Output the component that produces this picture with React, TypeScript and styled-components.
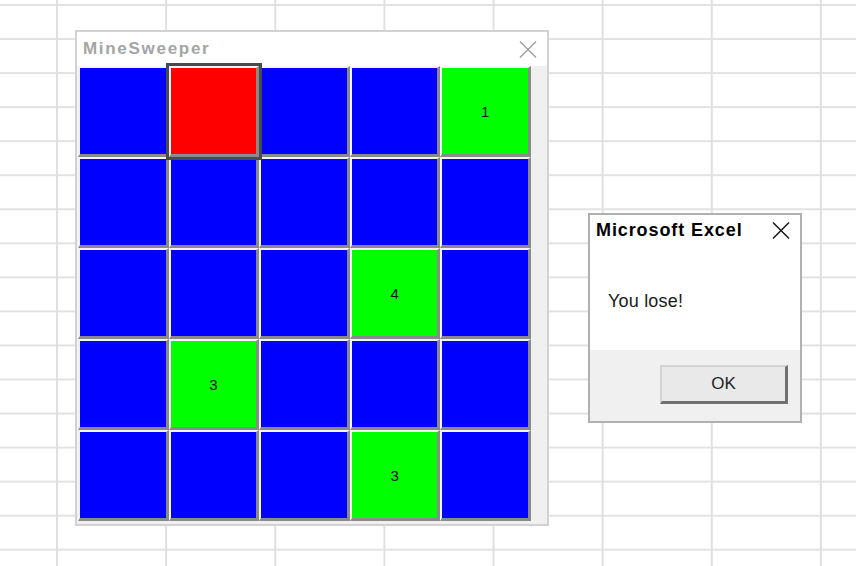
import React from "react";
import styled, { createGlobalStyle } from "styled-components";

const GlobalStyle = createGlobalStyle`
  html, body {
    margin: 0;
    padding: 0;
    background: #ffffff;
  }
  body {
    font-family: "Liberation Sans", Arial, sans-serif;
  }
`;

const Sheet = styled.div`
  width: 856px;
  height: 566px;
  overflow: hidden;
  display: flex;
  align-items: flex-start;
  gap: 39px;
  padding: 30px 0 0 75px;
  box-sizing: border-box;
  background-color: #ffffff;
  background-image: linear-gradient(to right, #e0e0e0 2px, transparent 2px),
    linear-gradient(to bottom, #e2e2e2 2px, transparent 2px);
  background-size: 109.14px 100%, 100% 34.06px;
  background-position: 56px 0, 0 4px;
`;

const GameWindow = styled.div`
  width: 474px;
  border: 2px solid #d2d2d2;
  box-sizing: border-box;
  background: #f0f0f0;
  display: flex;
  flex-direction: column;
`;

const TitleBar = styled.div<{ $height: number }>`
  height: ${(p) => p.$height}px;
  background: #ffffff;
  display: flex;
  align-items: center;
  justify-content: space-between;
  padding: 0 10px 0 6px;
`;

const GameTitle = styled.span`
  font-size: 17px;
  font-weight: bold;
  letter-spacing: 1.7px;
  color: #a4a4a4;
`;

const GameBody = styled.div`
  display: flex;
  padding: 0 16px 3px 1px;
`;

const Board = styled.div`
  width: 453px;
  height: 455px;
  display: grid;
  grid-template-columns: repeat(5, 1fr);
  grid-template-rows: repeat(5, 1fr);
`;

const CELL_COLORS = {
  hidden: "#0000ff",
  mine: "#ff0000",
  open: "#00ff00",
};

type CellKind = keyof typeof CELL_COLORS;

const Cell = styled.div<{ $kind: CellKind; $focused?: boolean }>`
  position: relative;
  z-index: ${(p) => (p.$focused ? 1 : 0)};
  background: ${(p) => CELL_COLORS[p.$kind]};
  border-top: 2px solid #f4f4f8;
  border-left: 2px solid #f4f4f8;
  border-right: 3px solid #8a8a8a;
  border-bottom: 3px solid #8a8a8a;
  box-shadow: ${(p) => (p.$focused ? "0 0 0 3px #4a4a4a" : "none")};
  display: flex;
  align-items: center;
  justify-content: center;
  font-size: 15px;
  color: #111111;
`;

const Dialog = styled.div`
  margin-top: 183px;
  width: 214px;
  height: 210px;
  border: 2px solid #b0b0b0;
  box-sizing: border-box;
  background: #ffffff;
  display: flex;
  flex-direction: column;
`;

const DialogTitle = styled.span`
  font-size: 18px;
  font-weight: bold;
  letter-spacing: 0.9px;
  color: #000000;
`;

const Message = styled.div`
  height: 105px;
  box-sizing: border-box;
  padding: 46px 0 0 18px;
  font-size: 18px;
  line-height: 20px;
  letter-spacing: 0.2px;
  color: #1a1a1a;
`;

const Footer = styled.div`
  flex: 1;
  background: #f0f0f0;
  display: flex;
  justify-content: flex-end;
  align-items: flex-start;
  padding: 15px 12px 0 0;
`;

const OkButton = styled.button`
  width: 128px;
  height: 39px;
  box-sizing: border-box;
  background: #e9e9e9;
  border-top: 2px solid #d4d4d4;
  border-left: 2px solid #d4d4d4;
  border-right: 3px solid #707070;
  border-bottom: 3px solid #707070;
  font-family: "Liberation Sans", Arial, sans-serif;
  font-size: 17px;
  color: #222222;
  padding: 0;
`;

function CloseIcon({ color }: { color: string }) {
  return (
    <svg width="18" height="17" viewBox="0 0 18 17">
      <path d="M1 0.5 L17 16.5 M17 0.5 L1 16.5" stroke={color} strokeWidth="1.5" fill="none" />
    </svg>
  );
}

const board: { kind: CellKind; value?: number; focused?: boolean }[][] = [
  [{ kind: "hidden" }, { kind: "mine", focused: true }, { kind: "hidden" }, { kind: "hidden" }, { kind: "open", value: 1 }],
  [{ kind: "hidden" }, { kind: "hidden" }, { kind: "hidden" }, { kind: "hidden" }, { kind: "hidden" }],
  [{ kind: "hidden" }, { kind: "hidden" }, { kind: "hidden" }, { kind: "open", value: 4 }, { kind: "hidden" }],
  [{ kind: "hidden" }, { kind: "open", value: 3 }, { kind: "hidden" }, { kind: "hidden" }, { kind: "hidden" }],
  [{ kind: "hidden" }, { kind: "hidden" }, { kind: "hidden" }, { kind: "open", value: 3 }, { kind: "hidden" }],
];

export default function App() {
  return (
    <>
      <GlobalStyle />
      <Sheet>
        <GameWindow>
          <TitleBar $height={34}>
            <GameTitle>MineSweeper</GameTitle>
            <CloseIcon color="#a0a0a0" />
          </TitleBar>
          <GameBody>
            <Board>
              {board.flat().map((cell, i) => (
                <Cell key={i} $kind={cell.kind} $focused={cell.focused}>
                  {cell.value}
                </Cell>
              ))}
            </Board>
          </GameBody>
        </GameWindow>
        <Dialog>
          <TitleBar $height={30}>
            <DialogTitle>Microsoft Excel</DialogTitle>
            <CloseIcon color="#1a1a1a" />
          </TitleBar>
          <Message>You lose!</Message>
          <Footer>
            <OkButton>OK</OkButton>
          </Footer>
        </Dialog>
      </Sheet>
    </>
  );
}
